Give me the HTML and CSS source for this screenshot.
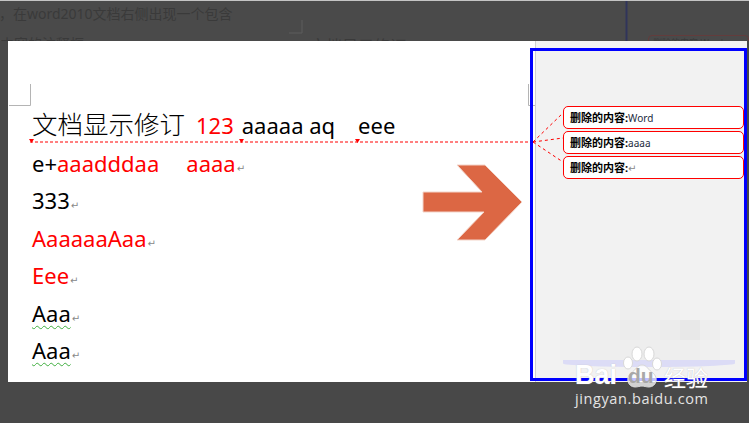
FILE: index.html
```html
<!DOCTYPE html>
<html lang="zh-CN">
<head>
  <meta charset="UTF-8">
  <title>Word 2010 显示修订</title>
  <link rel="stylesheet" href="styles.css">
</head>
<body>
  <div class="screen">
    <!-- 被遮住的原文页面 -->
    <div class="backdrop">
      <p class="backdrop-line">，在word2010文档右侧出现一个包含</p>
      <div class="backdrop-row">
        <span class="backdrop-text">内容的注释框</span>
        <span class="backdrop-title">文档显示修订</span>
        <span class="backdrop-note">删除的内容:Word</span>
      </div>
    </div>

    <div class="doc">
      <div class="page">
        <p class="line"><span class="cjk">文档显示修订</span><span class="gap-a"></span><span class="red">123</span><span class="gap-b"></span>aaaaa aq<span class="gap-c"></span>eee</p>
        <p class="line">e+<span class="red">aaadddaa<span class="gap-d"></span>aaaa</span><span class="mark">↵</span></p>
        <p class="line">333<span class="mark">↵</span></p>
        <p class="line red">AaaaaaAaa<span class="mark">↵</span></p>
        <p class="line red">Eee<span class="mark">↵</span></p>
        <p class="line"><span class="wavy">Aaa</span><span class="mark">↵</span></p>
        <p class="line"><span class="wavy">Aaa</span><span class="mark">↵</span></p>
      </div>
      <div class="sidebar">
        <div class="balloon"><b>删除的内容:</b><span>Word</span></div>
        <div class="balloon"><b>删除的内容:</b><span>aaaa</span></div>
        <div class="balloon"><b>删除的内容:</b><span class="grey">↵</span></div>
      </div>
    </div>

    <!-- 箭头、虚线、裁剪标记 -->
    <svg class="overlay" viewBox="0 0 749 423" width="749" height="423">
      <path d="M302 20V33H289" fill="none" stroke="#5c5c5c"/>
      <path d="M626.500 0V41" stroke="#30345a" stroke-width="2"/>
      <path d="M30.500 84V105.500H9" fill="none" stroke="#b4b4b4"/>
      <path d="M528.500 84V105.500H535" fill="none" stroke="#b4b4b4"/>
      <path d="M30 142H533" stroke="#f00" stroke-dasharray="3 2"/>
      <path d="M533 142L563 113M533 142L563 138M533 142L563 162" stroke="#f00" stroke-dasharray="3 3"/>
      <path d="M29 139h5l-2.500 4zM239 139h5l-2.500 4zM355 139h5l-2.500 4z" fill="#f00"/>
      <path d="M423 192H482L457 165H485L522 202L485 240H457L484 212H423Z" fill="#dc6744" stroke="#f3d5ca"/>
    </svg>

    <div class="mosaic">
      <i></i><i></i><i></i><i class="t2"></i><i class="t2"></i><i class="t1"></i><i></i><i></i>
      <i class="t1"></i><i class="t2"></i><i class="t2"></i><i class="t3"></i><i class="t2"></i><i class="t3"></i><i class="t4"></i><i class="t2"></i>
      <i class="t1"></i><i class="t2"></i><i class="t2"></i><i class="t2"></i><i class="t2"></i><i class="t2"></i><i class="t2"></i><i class="t1"></i>
    </div>
    <div class="arc"></div>
    <div class="focus-box"></div>

    <!-- 水印 -->
    <div class="watermark">
      <div class="wm-logo">
        <span class="wm-bai">Bai</span>
        <svg class="paw" viewBox="0 0 40 44" width="40" height="44">
          <ellipse cx="6" cy="18" rx="4.500" ry="6" fill="#fff" stroke="#d8d8d8"/>
          <ellipse cx="15" cy="9" rx="5" ry="7" fill="#fff" stroke="#d8d8d8"/>
          <ellipse cx="27" cy="9" rx="5" ry="7" fill="#fff" stroke="#d8d8d8"/>
          <ellipse cx="35" cy="19" rx="4.500" ry="6" fill="#fff" stroke="#d8d8d8"/>
          <path d="M20 20c-5 0-6 5-11 8-6 5-3 14 4 14 3 0 5-1 7-1s4 1 7 1c7 0 10-9 4-14-5-3-6-8-11-8z" fill="#fff" fill-opacity=".75" stroke="#d8d8d8"/>
        </svg>
        <span class="wm-du">du</span>
        <span class="wm-cn">经验</span>
      </div>
      <div class="wm-url">jingyan.baidu.com</div>
    </div>
  </div>
</body>
</html>
```

FILE: styles.css
```css
body {
  margin: 0;
  background-color: #484848;
  font-family: "Noto Sans", "Noto Sans CJK SC", sans-serif;
  overflow: hidden;
}
p {
  margin: 0;
}
.screen {
  position: relative;
  width: 749px;
  height: 423px;
  overflow: hidden;
  border-top: 1px solid #c4c4c4;
  box-sizing: border-box;
}

/* 背景页面 */
.backdrop {
  height: 40px;
  overflow: hidden;
  background-color: #4a4a4a;
  color: #3a3a3a;
  font-size: 14px;
}
.backdrop-line {
  margin-left: -1px;
  line-height: 25px;
}
.backdrop-row {
  display: flex;
  margin-top: 5px;
  line-height: 26px;
}
.backdrop-text {
  width: 310px;
}
.backdrop-title {
  width: 338px;
  margin-top: 2px;
  font-size: 16px;
}
.backdrop-note {
  flex: 1;
  margin-top: 4px;
  padding-left: 4px;
  border: 1px solid #633c3c;
  border-radius: 4px;
  font-size: 9px;
  line-height: 14px;
}

/* 文档 */
.doc {
  display: flex;
  height: 341px;
  margin: 0 2px 0 8px;
}
.page {
  width: 527px;
  padding: 66px 0 0 24px;
  box-sizing: border-box;
  background-color: #ffffff;
  color: #000000;
}
.line {
  height: 37.500px;
  font-size: 22px;
  line-height: 37.500px;
  white-space: nowrap;
}
.cjk {
  font-family: "Noto Sans CJK SC", sans-serif;
  font-size: 25.500px;
  font-weight: 300;
  line-height: 0;
}
.gap-a,
.gap-b,
.gap-c,
.gap-d {
  display: inline-block;
}
.gap-a {
  width: 11px;
}
.gap-b {
  width: 8px;
}
.gap-c {
  width: 23px;
}
.gap-d {
  width: 27px;
}
.red {
  color: #ff0000;
}
.mark {
  margin-left: 1px;
  color: #888888;
  font-family: "DejaVu Sans", sans-serif;
  font-size: 10px;
  font-weight: normal;
  line-height: 0;
}
.wavy {
  text-decoration: underline wavy #3fae3f 1px;
  text-underline-offset: 3px;
}
.sidebar {
  flex: 1;
  display: flex;
  flex-direction: column;
  gap: 2px;
  padding: 65px 3px 0 27px;
  background-color: #f2f2f2;
  border-left: 1px solid #d0d0d0;
}
.balloon {
  height: 23px;
  padding-left: 6px;
  box-sizing: border-box;
  border: 1px solid #ff0000;
  border-radius: 5px;
  background-color: #ffffff;
  font-size: 10px;
  line-height: 22px;
  color: #1a2a40;
  white-space: nowrap;
}
.balloon b {
  font-size: 11px;
  color: #000000;
}
.grey {
  color: #888888;
  font-family: "DejaVu Sans", sans-serif;
}

/* 覆盖层 */
.overlay {
  position: absolute;
  top: -1px;
  left: 0;
}
.focus-box {
  position: absolute;
  top: 47px;
  left: 530px;
  width: 217px;
  height: 333px;
  box-sizing: border-box;
  border: 3px solid #0000ff;
}
.mosaic {
  position: absolute;
  top: 299px;
  left: 560px;
  display: grid;
  grid-template-columns: repeat(8, 20px);
  grid-auto-rows: 20px;
}
.mosaic .t1 {
  background-color: #f0f0f0;
}
.mosaic .t2 {
  background-color: #eeeeee;
}
.mosaic .t3 {
  background-color: #ececec;
}
.mosaic .t4 {
  background-color: #e8e8e8;
}
.arc {
  position: absolute;
  top: 359px;
  left: 563px;
  width: 172px;
  height: 7px;
  background-color: #dcdcf6;
  border-radius: 0 0 50% 50%;
}
.watermark {
  position: absolute;
  top: 345px;
  left: 575px;
  color: #ffffff;
  text-shadow: 0 0 1px #b8b8b8;
}
.wm-logo {
  display: flex;
  align-items: flex-end;
  height: 43px;
  font-family: "Liberation Sans", sans-serif;
  font-size: 27px;
  font-weight: bold;
  line-height: 27px;
}
.wm-bai {
  width: 47px;
}
.paw {
  margin-right: -38px;
}
.wm-du {
  width: 40px;
  padding-left: 4px;
  box-sizing: border-box;
  color: #a8a8a8;
  font-size: 21px;
  text-shadow: none;
}
.wm-cn {
  font-family: "Noto Sans CJK SC", sans-serif;
  font-size: 22px;
  font-weight: normal;
  line-height: 26px;
}
.wm-url {
  color: #e4e4e4;
  font-family: "Open Sans", sans-serif;
  font-size: 14.500px;
  line-height: 20px;
  letter-spacing: 0.6px;
  text-shadow: none;
}
```
